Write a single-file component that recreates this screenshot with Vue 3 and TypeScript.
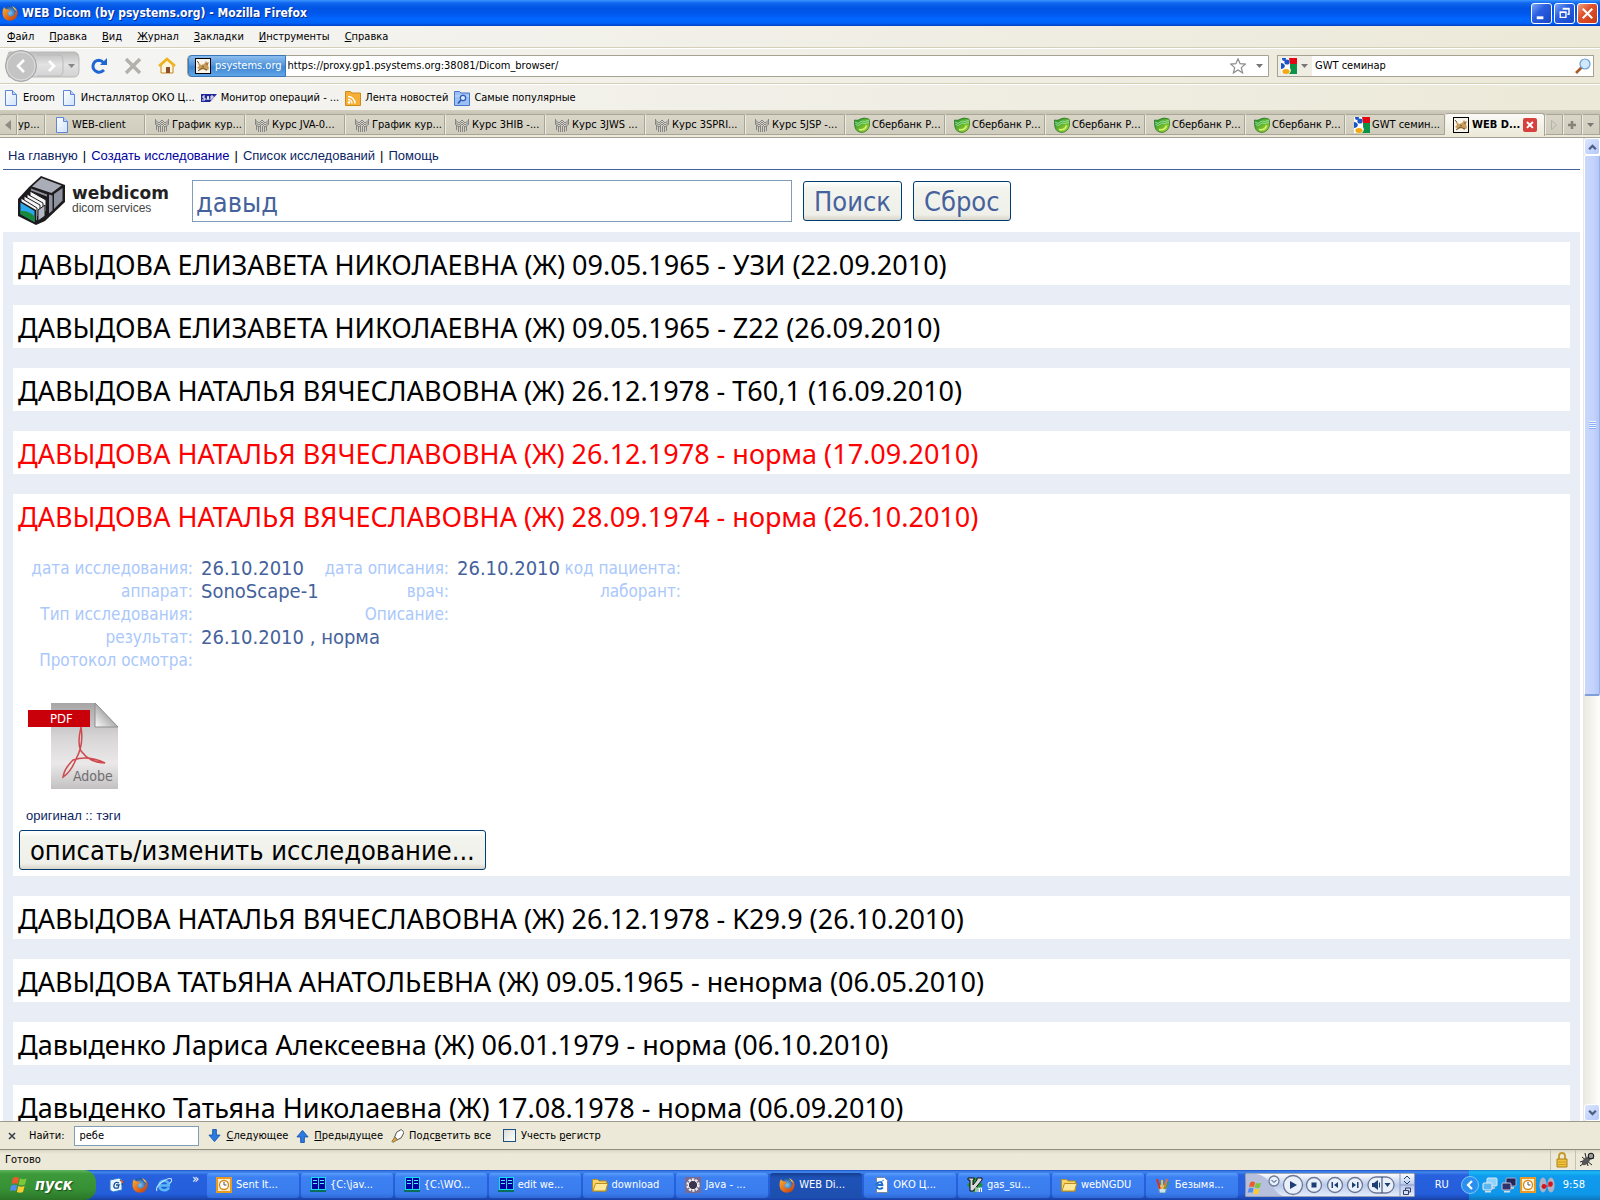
<script setup lang="ts">
import { ref } from 'vue'

interface Bookmark { icon: string; label: string }
interface Tab { icon: string; label: string }
interface Study { id: number; title: string; alert?: boolean; open?: boolean }
interface Field { label: string; value: string; span?: number }

const menu = [
  ['Ф', 'айл'], ['П', 'равка'], ['В', 'ид'], ['Ж', 'урнал'],
  ['З', 'акладки'], ['И', 'нструменты'], ['С', 'правка'],
]

const bookmarks: Bookmark[] = [
  { icon: 'page', label: 'Eroom' },
  { icon: 'page', label: 'Инсталлятор ОКО Ц...' },
  { icon: 'sap', label: 'Монитор операций - ...' },
  { icon: 'rss', label: 'Лента новостей' },
  { icon: 'smart', label: 'Самые популярные' },
]

const tabs: Tab[] = [
  { icon: 'page', label: 'WEB-client' },
  { icon: 'course', label: 'График кур...' },
  { icon: 'course', label: 'Курс JVA-0...' },
  { icon: 'course', label: 'График кур...' },
  { icon: 'course', label: 'Курс 3HIB -...' },
  { icon: 'course', label: 'Курс 3JWS ...' },
  { icon: 'course', label: 'Курс 3SPRI...' },
  { icon: 'course', label: 'Курс 5JSP -...' },
  { icon: 'sber', label: 'Сбербанк Р...' },
  { icon: 'sber', label: 'Сбербанк Р...' },
  { icon: 'sber', label: 'Сбербанк Р...' },
  { icon: 'sber', label: 'Сбербанк Р...' },
  { icon: 'sber', label: 'Сбербанк Р...' },
  { icon: 'google', label: 'GWT семин...' },
]

const studies: Study[] = [
  { id: 1, title: 'ДАВЫДОВА ЕЛИЗАВЕТА НИКОЛАЕВНА (Ж) 09.05.1965 - УЗИ (22.09.2010)' },
  { id: 2, title: 'ДАВЫДОВА ЕЛИЗАВЕТА НИКОЛАЕВНА (Ж) 09.05.1965 - Z22 (26.09.2010)' },
  { id: 3, title: 'ДАВЫДОВА НАТАЛЬЯ ВЯЧЕСЛАВОВНА (Ж) 26.12.1978 - T60,1 (16.09.2010)' },
  { id: 4, title: 'ДАВЫДОВА НАТАЛЬЯ ВЯЧЕСЛАВОВНА (Ж) 26.12.1978 - норма (17.09.2010)', alert: true },
  { id: 5, title: 'ДАВЫДОВА НАТАЛЬЯ ВЯЧЕСЛАВОВНА (Ж) 28.09.1974 - норма (26.10.2010)', alert: true, open: true },
  { id: 6, title: 'ДАВЫДОВА НАТАЛЬЯ ВЯЧЕСЛАВОВНА (Ж) 26.12.1978 - K29.9 (26.10.2010)' },
  { id: 7, title: 'ДАВЫДОВА ТАТЬЯНА АНАТОЛЬЕВНА (Ж) 09.05.1965 - ненорма (06.05.2010)' },
  { id: 8, title: 'Давыденко Лариса Алексеевна (Ж) 06.01.1979 - норма (06.10.2010)' },
  { id: 9, title: 'Давыденко Татьяна Николаевна (Ж) 17.08.1978 - норма (06.09.2010)' },
]

const details: Field[][] = [
  [
    { label: 'дата исследования:', value: '26.10.2010' },
    { label: 'дата описания:', value: '26.10.2010' },
    { label: 'код пациента:', value: '' },
  ],
  [
    { label: 'аппарат:', value: 'SonoScape-1' },
    { label: 'врач:', value: '' },
    { label: 'лаборант:', value: '' },
  ],
  [
    { label: 'Тип исследования:', value: '' },
    { label: 'Описание:', value: '', span: 3 },
  ],
  [{ label: 'результат:', value: '26.10.2010 , норма', span: 5 }],
  [{ label: 'Протокол осмотра:', value: '', span: 5 }],
]

const tasks: Tab[] = [
  { icon: 'outlook', label: 'Sent It...' },
  { icon: 'far', label: '{C:\\jav...' },
  { icon: 'far', label: '{C:\\WO...' },
  { icon: 'far', label: 'edit we...' },
  { icon: 'folder', label: 'download' },
  { icon: 'eclipse', label: 'Java - ...' },
  { icon: 'firefox', label: 'WEB Di...' },
  { icon: 'iepage', label: 'ОКО Ц...' },
  { icon: 'vim', label: 'gas_su...' },
  { icon: 'folder', label: 'webNGDU' },
  { icon: 'paint', label: 'Безымя...' },
]
const activeTask = 6

const address = ref('https://proxy.gp1.psystems.org:38081/Dicom_browser/')
const webSearch = ref('GWT семинар')
const query = ref('давыд')
const findText = ref('ребе')
const matchCase = ref(false)
</script>

<template>
  <div class="desktop">
    <svg class="sprites" aria-hidden="true">
      <defs>
        <linearGradient id="g-page" x1="0" y1="0" x2="1" y2="1"><stop offset="0" stop-color="#fff" /><stop offset="1" stop-color="#cfe2fb" /></linearGradient>
        <linearGradient id="g-sber" x1="0" y1="0" x2="1" y2="1"><stop offset="0" stop-color="#1b8a2c" /><stop offset="1" stop-color="#b4e02a" /></linearGradient>
        <linearGradient id="g-pdf" x1="0" y1="0" x2="0" y2="1"><stop offset="0" stop-color="#a8a5a7" /><stop offset="0.4" stop-color="#d8d5d6" /><stop offset="0.7" stop-color="#eae8e8" /><stop offset="1" stop-color="#c4c1c3" /></linearGradient>
        <linearGradient id="g-fold" x1="1" y1="0" x2="0" y2="1"><stop offset="0.4" stop-color="#a19fa1" /><stop offset="1" stop-color="#fff" /></linearGradient>
        <radialGradient id="g-globe"><stop offset="0" stop-color="#7fc4f2" /><stop offset="1" stop-color="#1b4f9c" /></radialGradient>
        <linearGradient id="g-fox" x1="0" y1="0" x2="1" y2="1"><stop offset="0" stop-color="#f9b233" /><stop offset="0.5" stop-color="#e8701a" /><stop offset="1" stop-color="#b53a12" /></linearGradient>
      </defs>
      <symbol id="page" viewBox="0 0 16 16"><path d="M2.500.500h7l4 4v11h-11z" fill="url(#g-page)" stroke="#5f86d6" /><path d="M9.500.500v4h4" fill="#bcd4f8" stroke="#5f86d6" /></symbol>
      <symbol id="sap" viewBox="0 0 16 16"><path d="M0 4h16l-7 8H0z" fill="#20279a" /><path d="M4 6H2v2h2v2H1M6 10l1-4 1 4M10 10V6h2v2h-2" fill="none" stroke="#fff" /></symbol>
      <symbol id="rss" viewBox="0 0 16 16"><path d="M.500 3V1.500h5L7 3h8.500v12.500H.500z" fill="#f6ae33" stroke="#cf8a1c" /><path d="M3 6.500a7 7 0 0 1 7 7M3 9.500a4 4 0 0 1 4 4" fill="none" stroke="#fff" stroke-width="1.500" /><circle cx="4" cy="12.500" r="1.300" fill="#fff" /></symbol>
      <symbol id="smart" viewBox="0 0 16 16"><path d="M.500 3V1.500h5L7 3h8.500v12.500H.500z" fill="#9dc0f4" stroke="#4a75cc" /><path d="M1 6h14" stroke="#c8defc" /><circle cx="9" cy="8" r="2.700" fill="#dcebff" stroke="#2c58b4" stroke-width="1.200" /><path d="M7 10l-3 3.500" stroke="#2c58b4" stroke-width="1.800" /></symbol>
      <symbol id="course" viewBox="0 0 16 16"><path d="M1 3l4 3 3-3 3 3 4-3M1 5l4 3 3-3 3 3 4-3M1 7l4 3 3-3 3 3 4-3M1.500 2v5M14.500 2v5M4.500 9v6M6.500 9v6M8.500 9v6M10.500 9v6M12.500 9v5M2.500 8v5" fill="none" stroke="#858585" stroke-width="1" /></symbol>
      <symbol id="sber" viewBox="0 0 16 16"><path d="M.500 3q3 1 6-1t8.500 0q1 3 .500 6-1 6.500-7.500 7.500Q2 15 1 10 0 6 .500 3z" fill="url(#g-sber)" stroke="#1c6e24" stroke-width=".700" /><path d="M1 5l3 1.500L8 4l3 .500L15 3M1.500 7.500l3 1L8 6l3 .500 4-1.500" fill="none" stroke="#8fe0a0" /><path d="M5 12.500q6 1 7.500-4" stroke="#d6f37d" fill="none" stroke-width="1.500" /></symbol>
      <symbol id="google" viewBox="0 0 16 16"><path d="M0 0h16v16H0z" fill="#fff" /><path d="M8 0h8v6H9z" fill="#e30613" /><path d="M9 6h7v10H8q3-3 1-6z" fill="#0c9347" /><circle cx="3" cy="1" r="2" fill="#1a55c8" /><circle cx="6" cy="4" r="2.600" fill="#1a55c8" /><path d="M0 5q3 0 4 3-1 3-4 3z" fill="#1a55c8" /><ellipse cx="5" cy="13.500" rx="3.600" ry="2.500" fill="#f4a70e" /></symbol>
      <symbol id="cat" viewBox="0 0 16 16"><rect x=".500" y=".500" width="15" height="15" fill="#f8f5ee" stroke="#000" /><path d="M2 3l2 2 2 2 3-1 2-3 1 1.500L14 4l-1 3 1 4-3 2-2-2-3 1-3 1 1-2-2-1 2-2z" fill="#c99c5c" /><path d="M2 3l2 2M7 8l2 1M3 13l4-3 5 2M11 6l2 0" stroke="#7b5b33" fill="none" /></symbol>
      <symbol id="firefox" viewBox="0 0 16 16"><circle cx="8" cy="8" r="7" fill="url(#g-globe)" /><path d="M2 2Q0 5 .500 9q1 6.500 7.500 6.700 6.500-.200 7.500-6.700.400-4-2.500-6.500Q14.500 6 13 9q-2 3-5 2.500-3-1-2.500-4L8 6 6.500 4.500Q5 4.500 4 4 2.500 3.500 2 2z" fill="url(#g-fox)" /><path d="M10 1q3 1 4.500 5-1-1-2-1.500" fill="#fbd24a" /></symbol>
      <symbol id="ie" viewBox="0 0 16 16"><path d="M13 10.500Q11 13.500 8 13.300 3.500 13 3.300 8.500 3.600 4 8 3.700q4.700.300 4.800 4.800H4" fill="none" stroke="#59b9f5" stroke-width="2.600" /><path d="M1 14Q-1 10 6 5t9.500-3q1 2-2 4.500" fill="none" stroke="#bfe6ff" stroke-width="1.100" /></symbol>
      <symbol id="iepage" viewBox="0 0 16 16"><path d="M3.500.500h8l3 3v12h-11z" fill="#fff" stroke="#7b8797" /><path d="M10 10.500Q7 13 4.500 11 2 8 5 5.500 9 4 9.500 8H4" fill="none" stroke="#1d6fcf" stroke-width="1.800" /><path d="M1 13Q1 8 11 3" stroke="#3a8be0" fill="none" /></symbol>
      <symbol id="mail" viewBox="0 0 16 16"><path d="M2 3l9-2 3 2v10l-9 2-3-2z" fill="#e7f3fd" stroke="#2a78c8" /><path d="M11 6Q7 4 6 8t4 3l1-3H8M12 3l3 2-1 3" fill="none" stroke="#174a96" stroke-width="1.300" /><path d="M13 3l2 3" stroke="#e0661b" stroke-width="1.500" /></symbol>
      <symbol id="outlook" viewBox="0 0 16 16"><rect x="1" y="1" width="14" height="14" fill="#fbeed0" stroke="#e89a22" stroke-width="2" /><circle cx="8" cy="8" r="4.500" fill="#fff" stroke="#d58717" stroke-width="1.300" /><path d="M8 5v3h2.500" stroke="#555" fill="none" /></symbol>
      <symbol id="far" viewBox="0 0 16 16"><path d="M1 0h15v13H1z" fill="#12e0f0" /><path d="M2 1h6v11H2zM9 1h6v11H9z" fill="#0000a0" /><path d="M3 3.500h4M3 6.500h4M10 3.500h4M10 6.500h4" stroke="#58e8ff" /><path d="M0 13h16v2H0z" fill="#0b6e5a" /></symbol>
      <symbol id="folder" viewBox="0 0 16 16"><path d="M.500 4V2.500h5L7 4h7.500v10H.500z" fill="#f7d56a" stroke="#b98d1f" /><path d="M1 14L3.500 6.500h12.300L13.500 14z" fill="#fde999" stroke="#b98d1f" /></symbol>
      <symbol id="eclipse" viewBox="0 0 16 16"><rect width="16" height="16" fill="#7b6a8f" /><circle cx="8" cy="8" r="5.500" fill="#4c4459" stroke="#eee" stroke-width="2.400" stroke-dasharray="2.300 1.150" /><circle cx="8" cy="8" r="4.600" fill="#3b3550" stroke="#f4f4f4" stroke-width="1" /></symbol>
      <symbol id="vim" viewBox="0 0 16 16"><path d="M8 0l8 8-8 8-8-8z" fill="#1f8f3a" /><path d="M1 1h6v2H6v5l4-5V1h5v2L6 14H3V3H1z" fill="#d9dadb" stroke="#111" /><path d="M9 10v5M11 15v-4h1.500v4M13 11h1.500v4" stroke="#fff" stroke-width="1" fill="none" /></symbol>
      <symbol id="paint" viewBox="0 0 16 16"><path d="M3 8h9l-1.500 8h-6z" fill="#c9e4f2" stroke="#6f93ad" /><path d="M5 12L2 2" stroke="#d4321f" stroke-width="2" /><path d="M7 12V3" stroke="#f0c02b" stroke-width="2" /><path d="M9 12l3-10" stroke="#e8762a" stroke-width="2" /><path d="M10 12l4-7" stroke="#3f9d46" stroke-width="1.500" /></symbol>
      <symbol id="winflag" viewBox="0 0 20 20"><path d="M4 3q3-2 6 0L8.500 9q-3-1.500-6 0z" fill="#ee5a2a" /><path d="M11 3.500q3 1.500 6.500 0L16 9.500q-3 1.500-6.500 0z" fill="#7cc73b" /><path d="M2.200 10.500q3-1.500 6 0L6.800 16q-3-1.500-6 0z" fill="#4f8eee" /><path d="M9.300 11q3 1.500 6.300 0L14 17q-3 1.500-6.200 0z" fill="#fbcb31" /></symbol>
      <symbol id="net" viewBox="0 0 16 16"><rect x="5" y="1" width="10" height="8" rx="1" fill="#8fd4fa" stroke="#dce8f2" /><path d="M8 10h5v2H8z" fill="#b9c4cf" /><rect x="1" y="6" width="9" height="7" rx="1" fill="#5cb7f0" stroke="#e8eef4" /><path d="M3 14h6v1.500H3z" fill="#d6dde4" /></symbol>
      <symbol id="netoff" viewBox="0 0 16 16"><rect x="5" y="1" width="10" height="8" rx="1" fill="#23265a" stroke="#a9b2c8" /><path d="M8 10h5v2H8z" fill="#b9c4cf" /><rect x="1" y="6" width="9" height="7" rx="1" fill="#30336b" stroke="#c3cada" /><path d="M3 14h6v1.500H3z" fill="#d6dde4" /></symbol>
      <symbol id="vnc" viewBox="0 0 16 16"><ellipse cx="4" cy="8" rx="3.600" ry="7.500" fill="#aeb0c4" /><ellipse cx="12" cy="8" rx="3.600" ry="7.500" fill="#aeb0c4" /><path d="M3 9h10" stroke="#d3262b" /><circle cx="5" cy="9.500" r="2.400" fill="#d3161d" /><circle cx="11.500" cy="7" r="2.400" fill="#d3161d" /></symbol>
    </svg>

    <header class="titlebar">
      <svg class="i16"><use href="#firefox" /></svg>
      <h1>WEB Dicom (by psystems.org) - Mozilla Firefox</h1>
      <button class="winbtn" aria-label="Свернуть"><svg viewBox="0 0 20 20"><path d="M5 13h7v3H5z" fill="#fff" /></svg></button>
      <button class="winbtn" aria-label="Восстановить"><svg viewBox="0 0 20 20"><path d="M8 4h7v2H8zM14 4h1.500v7.500H13V10h1z" fill="#fff" /><path d="M5.500 8.500h6v5.500h-6z" fill="none" stroke="#fff" stroke-width="1.400" /><path d="M5 8h7v1.500H5z" fill="#fff" /></svg></button>
      <button class="winbtn close" aria-label="Закрыть"><svg viewBox="0 0 20 20"><path d="M5 5l10 10M15 5L5 15" stroke="#fff" stroke-width="2.200" /></svg></button>
    </header>

    <nav class="menubar">
      <button v-for="m in menu" :key="m[1]"><u>{{ m[0] }}</u>{{ m[1] }}</button>
    </nav>

    <div class="toolbar">
      <svg class="backfwd" viewBox="0 0 78 34">
        <defs><linearGradient id="g-nav" x1="0" y1="0" x2="0" y2="1"><stop offset="0" stop-color="#bcbcbc" /><stop offset="0.5" stop-color="#e2e2e2" /><stop offset="1" stop-color="#d2d2d2" /></linearGradient></defs>
        <path d="M6 3h66q4 1 4 6v12q0 7-5 7H6q-6-12 0-25z" fill="url(#g-nav)" stroke="#b9b9b9" />
        <path d="M34 6h22q4 0 4 4v11q0 6-4 6H34" fill="none" stroke="#bbb" />
        <circle cx="18" cy="17" r="15.500" fill="#c4c4c4" stroke="#a4a4a4" /><circle cx="18" cy="17" r="14" fill="none" stroke="#dedede" />
        <path d="M21 11l-6 6 6 6M46 12l5 5-5 5" fill="none" stroke="#fff" stroke-width="2.600" />
        <path d="M65 15h7l-3.500 4z" fill="#888" />
      </svg>
      <button class="tool" aria-label="Обновить"><svg viewBox="0 0 18 18"><path d="M14 13Q11 16 7.500 15 2.500 13 3 8.500 4 3.500 9 3.300q3 .2 4.500 2.500" fill="none" stroke="#1f67d2" stroke-width="3" /><path d="M10 8h7V1z" fill="#1f67d2" /></svg></button>
      <button class="tool" aria-label="Остановить"><svg viewBox="0 0 18 18"><path d="M2 2l14 14M16 2L2 16" stroke="#b3b1aa" stroke-width="3.400" /></svg></button>
      <button class="tool" aria-label="Домой"><svg viewBox="0 0 18 18"><path d="M3 8v8h12V8L9 3z" fill="#fdf6dc" stroke="#c68a1d" /><path d="M1 9l8-7 8 7" fill="none" stroke="#f0b21f" stroke-width="2.600" /><path d="M8 10h4v6H8z" fill="#8c4f2b" /></svg></button>
      <div class="urlbar">
        <span class="identity"><svg class="i16"><use href="#cat" /></svg>psystems.org</span>
        <input v-model="address" aria-label="Адрес" />
        <svg class="i16" viewBox="0 0 16 16"><path d="M8 .800l2.100 4.900 5.200.400-4 3.500 1.300 5.300L8 12l-4.600 2.900 1.300-5.300-4-3.500 5.200-.400z" fill="#fff" stroke="#8a8a8a" stroke-width="1.200" /></svg>
        <svg class="drop" viewBox="0 0 7 4"><path d="M0 0h7L3.500 4z" fill="#777" /></svg>
      </div>
      <div class="websearch">
        <span class="engine"><svg class="i16"><use href="#google" /></svg><svg class="drop" viewBox="0 0 7 4"><path d="M0 0h7L3.500 4z" fill="#777" /></svg></span>
        <input v-model="webSearch" aria-label="Поиск в интернете" />
        <svg class="i16" viewBox="0 0 16 16"><path d="M7 9l-6 6" stroke="#a95b26" stroke-width="2.600" /><circle cx="10" cy="6" r="5" fill="#cfe8fb" stroke="#6d9fd4" stroke-width="1.200" /></svg>
      </div>
    </div>

    <nav class="bookmarks">
      <a v-for="b in bookmarks" :key="b.label" href="#"><svg class="i16"><use :href="'#' + b.icon" /></svg>{{ b.label }}</a>
    </nav>

    <div class="tabs">
      <button class="tab scroll" aria-label="Назад"><svg viewBox="0 0 6 10"><path d="M6 0v10L0 5z" fill="#8f8d82" /></svg></button>
      <button class="tab partial">ур...</button>
      <button v-for="(t, n) in tabs" :key="n" class="tab"><svg class="i16"><use :href="'#' + t.icon" /></svg>{{ t.label }}</button>
      <div class="tab active"><svg class="i16"><use href="#cat" /></svg><b>WEB D...</b><button aria-label="Закрыть вкладку"><svg viewBox="0 0 14 14"><path d="M4 4l6 6M10 4l-6 6" stroke="#fff" stroke-width="2" /></svg></button></div>
      <button class="tab small" aria-label="Вперёд"><svg viewBox="0 0 6 10"><path d="M.500 .500v9l5-4.500z" fill="none" stroke="#b5b3a6" /></svg></button>
      <button class="tab small" aria-label="Новая вкладка"><svg viewBox="0 0 10 10"><path d="M5 1v8M1 5h8" stroke="#85837a" stroke-width="2.600" /></svg></button>
      <button class="tab small" aria-label="Список вкладок"><svg class="drop" viewBox="0 0 7 4"><path d="M0 0h7L3.500 4z" fill="#777" /></svg></button>
    </div>

    <div class="viewport">
      <main class="page">
        <nav class="links">
          <a href="#">На главную</a><span>|</span><a href="#" class="new">Создать исследование</a><span>|</span><a href="#">Список исследований</a><span>|</span><a href="#">Помощь</a>
        </nav>
        <form class="search" @submit.prevent>
          <div class="logo">
            <svg viewBox="0 0 48 50">
              <path d="M11 11L23 0l24 9v17L27 45l-9 4L0 40V23z" fill="#1c1a1c" />
              <path d="M14 10.500l9.500-8.500 20 7.500-10 7.500z" fill="#a9adb8" />
              <path d="M36 18l8.500-6v12.500L36 33z" fill="#8f939f" />
              <path d="M31 18.500l3.500 1v15l-3.500 3z" fill="#8f939f" /><path d="M13 12.500l16 6v2l-16-6z" fill="#8f939f" />
              <g fill="#f4f4f6" stroke="#1c1a1c"><path d="M12 15l16 9v12l-16-8z" /><path d="M9 18l16 9v12L9 30z" /><path d="M6 20l16 9v13L6 33z" /><path d="M3 22l16 10v13L3 36z" /></g>
              <path d="M20 34l7-5v11l-7 5z" fill="#b4b8c2" stroke="#1c1a1c" />
              <path d="M1 24l17 10v14L1 39z" fill="#1c1a1c" /><path d="M2.500 26.500l14 8.500v11l-14-8z" fill="#2aa6ea" /><path d="M2.500 35q9-.5 14 5.500v5.500l-14-8z" fill="#178a3a" />
            </svg>
            <span><b>webdicom</b><small>dicom services</small></span>
          </div>
          <input v-model="query" aria-label="Поиск пациента" />
          <button class="xp" type="submit">Поиск</button>
          <button class="xp" type="reset">Сброс</button>
        </form>

        <section class="results">
          <article v-for="s in studies" :key="s.id" :class="{ open: s.open }">
            <h2 :class="{ alert: s.alert }">{{ s.title }}</h2>
            <template v-if="s.open">
              <table>
                <colgroup><col class="c1" /><col class="c2" /><col class="c3" /><col class="c4" /><col class="c5" /><col class="c6" /></colgroup>
                <tbody>
                  <tr v-for="(r, n) in details" :key="n">
                    <template v-for="f in r" :key="f.label">
                      <th scope="row">{{ f.label }}</th><td :colspan="f.span ?? 1">{{ f.value }}</td>
                    </template>
                  </tr>
                </tbody>
              </table>
              <svg class="pdf" viewBox="0 0 90 86" role="img" aria-label="PDF">
                <path d="M23 0h44l23 24v62H23z" fill="url(#g-pdf)" />
                <path d="M67 0l23 24H67z" fill="url(#g-fold)" stroke="#8f8d8f" />
                <path d="M53 24q-4 17 0 24 9 12 24 12-17-8-32-3-9 9-10 17 8-5 13-18 8-14 5-32z" fill="none" stroke="#cf4a4f" stroke-width="1.500" />
                <path d="M0 7h62v17H0z" fill="#c9000a" />
                <text x="22" y="20" font-size="13" fill="#fff" class="narrow">PDF</text>
                <text x="45" y="78" font-size="14" fill="#6f6d6f" class="narrow">Adobe</text>
              </svg>
              <p><a href="#">оригинал</a> :: <a href="#">тэги</a></p>
              <button class="xp edit">описать/изменить исследование...</button>
            </template>
          </article>
        </section>
      </main>
      <div class="scrollbar">
        <button class="sb" aria-label="Вверх"><svg viewBox="0 0 8 5"><path d="M1 4.500l3-3 3 3" fill="none" stroke="#4d6185" stroke-width="2" /></svg></button>
        <div class="track"><div class="thumb"><i></i></div></div>
        <button class="sb" aria-label="Вниз"><svg viewBox="0 0 8 5"><path d="M1 .500l3 3 3-3" fill="none" stroke="#4d6185" stroke-width="2" /></svg></button>
      </div>
    </div>

    <div class="findbar">
      <button aria-label="Закрыть панель"><svg class="fx" viewBox="0 0 8 8"><path d="M1 1l6 6M7 1L1 7" stroke="#3a3f4f" stroke-width="1.600" /></svg></button>
      <label for="find">Найти:</label>
      <input id="find" v-model="findText" />
      <button><svg class="ar" viewBox="0 0 14 14"><path d="M5 0h4v6h4l-6 7-6-7h4z" fill="#2b7be0" stroke="#1b57ad" /></svg><span><u>С</u>ледующее</span></button>
      <button><svg class="ar" viewBox="0 0 14 14"><path d="M5 14h4V8h4L7 1 1 8h4z" fill="#2b7be0" stroke="#1b57ad" /></svg><span><u>П</u>редыдущее</span></button>
      <button><svg class="ar" viewBox="0 0 14 14"><path d="M6 3l5-3 3 3-3 6-4 2-3-3z" fill="#fff" stroke="#444" /><path d="M4 8l3 3-5 3-1-1z" fill="#e2a52b" stroke="#555" stroke-width=".700" /></svg><span>Подс<u>в</u>етить все</span></button>
      <label class="check"><input v-model="matchCase" type="checkbox" /><span>Учесть <u>р</u>егистр</span></label>
    </div>

    <footer class="status">
      <span>Готово</span>
      <i><svg class="i16" viewBox="0 0 16 16"><path d="M5 7V4q0-3 3-3t3 3v3" fill="none" stroke="#c49a2a" stroke-width="1.800" /><path d="M3 7h10v8H3z" fill="#f0c33c" stroke="#b07f12" /><path d="M4 10h8M4 12.500h8" stroke="#cf9c24" /></svg></i>
      <i><svg class="i16" viewBox="0 0 16 16"><path d="M3 5l10 8M6 1l3 13M1 10l14-4M1 14l4-3M9 2l5 3" stroke="#222" /><ellipse cx="7" cy="9" rx="5" ry="3" transform="rotate(-45 7 9)" fill="#555" /><circle cx="12" cy="4" r="2.800" fill="#999" stroke="#111" /></svg></i>
    </footer>

    <div class="taskbar">
      <button class="start"><svg viewBox="0 0 20 20"><use href="#winflag" /></svg>пуск</button>
      <div class="quick">
        <svg class="i16"><use href="#mail" /></svg><svg class="i16"><use href="#firefox" /></svg><svg class="i16"><use href="#ie" /></svg><span>»</span>
      </div>
      <div class="tasks">
        <button v-for="(t, n) in tasks" :key="n" :class="{ on: n === activeTask }"><svg class="i16"><use :href="'#' + t.icon" /></svg>{{ t.label }}</button>
      </div>
      <svg class="media" viewBox="0 0 170 24">
        <defs><linearGradient id="g-med" x1="0" y1="0" x2="0" y2="1"><stop offset="0" stop-color="#fff" /><stop offset="0.500" stop-color="#b9c9ea" /><stop offset="1" stop-color="#e8effb" /></linearGradient></defs>
        <path d="M0 0h170v24H0z" fill="url(#g-med)" stroke="#454f70" />
        <path d="M1 1h10q10 1 17 13 4 7 10 9H1z" fill="#b6bfdc" />
        <svg x="2" y="7" width="16" height="16"><use href="#winflag" /></svg>
        <g fill="#e9f0fa" stroke="#6b7796" stroke-width="1.300"><circle cx="29" cy="8" r="5" /><circle cx="48" cy="12" r="9.500" /><circle cx="69" cy="12" r="7.500" /><circle cx="90" cy="12" r="7.500" /><circle cx="110" cy="12" r="7.500" /><rect x="123" y="4" width="26" height="16" rx="8" /></g>
        <path d="M45 8l7 4-7 4zM66.500 9.500h5v5h-5zM93 9v6l-4-3zM86.500 9h1.500v6h-1.500zM107 9v6l4-3zM112 9h1.500v6H112zM127 10h2l4-3v10l-4-3h-2zM139.500 10h6l-3 4z" fill="#1d3f74" />
        <path d="M26.500 7l2.500 2.500L31.500 7M134.500 9.500v5M159 6l3-3 3 3M159 8l3 3 3-3M137 4v16" fill="none" stroke="#1d3f74" />
        <path d="M155 0v24M155 12h15" stroke="#8795bd" /><path d="M158.500 17.500h5v4h-5zM160.500 17v-2h5v4h-2" fill="none" stroke="#333d66" />
      </svg>
      <span class="lang">RU</span>
      <div class="tray">
        <button class="expand" aria-label="Показать значки"><svg viewBox="0 0 18 18"><circle cx="9" cy="9" r="8.500" fill="#2b8ff0" stroke="#7cc6fa" /><path d="M11 5L7 9l4 4" fill="none" stroke="#fff" stroke-width="2.200" /></svg></button>
        <svg class="i16"><use href="#net" /></svg><svg class="i16"><use href="#netoff" /></svg><svg class="i16"><use href="#outlook" /></svg><svg class="i16"><use href="#vnc" /></svg>
        <time>9:58</time>
      </div>
    </div>
  </div>
</template>

<style>
body { overflow: hidden; }
</style>

<style scoped>
.desktop {
  --ui: "DejaVu Sans Condensed", "DejaVu Sans", sans-serif;
  display: flex; flex-direction: column; height: 100vh; overflow: hidden;
  font: 11px/14px var(--ui); color: #000; background: #ece9d8;
}
* { box-sizing: border-box; }
.sprites { position: absolute; width: 0; height: 0; }
svg { display: block; flex: none; }
button { font: inherit; color: inherit; background: none; border: 0; padding: 0; white-space: nowrap; }
input { font: inherit; color: inherit; border: 0; padding: 0; margin: 0; min-width: 0; outline: 0; background: transparent; }
a { color: inherit; text-decoration: none; }
.i16 { width: 16px; height: 16px; }
.drop { width: 7px; height: 4px; }

.titlebar {
  display: flex; align-items: center; gap: 2px; height: 26px; flex: none; padding: 0 2px;
  background: linear-gradient(#3c95ff 0, #1067ee 3px, #0054e3 8px, #0058ee 14px, #0067ff 19px, #0063f8 23px, #0040c4 26px);
}
.titlebar h1 { flex: 1; margin: 0 0 0 2px; font: bold 12px/16px var(--ui); color: #fff; text-shadow: 1px 1px #0a2a86; }
.winbtn { width: 21px; height: 21px; border: 1px solid #fff; border-radius: 3px; background: linear-gradient(135deg, #7da7f7, #2a5fe0 40%, #1646c8); }
.winbtn.close { background: linear-gradient(135deg, #f0a080, #e0522c 40%, #c53a16); }

.menubar, .toolbar, .bookmarks { display: flex; align-items: center; flex: none; background: linear-gradient(to right, #f5f5f4, #ece9d8); }
.menubar { height: 22px; gap: 15px; padding: 0 7px; border-bottom: 1px solid #d4cfb8; }
.toolbar { height: 36px; padding: 0 6px 0 3px; border-top: 1px solid #fff; border-bottom: 1px solid #d4cfb8; }
.backfwd { width: 78px; height: 34px; }
.tool { margin-left: 9px; padding: 0; width: 18px; height: 18px; }
.tool + .tool { margin-left: 16px; }
.urlbar, .websearch { display: flex; align-items: center; height: 22px; border: 1px solid #a5a294; background: #fff; }
.urlbar { flex: 1; margin-left: 11px; padding-right: 5px; border-radius: 4px 0 0 4px; gap: 10px; }
.urlbar input { flex: 1; margin-left: -8px; }
.identity { display: flex; align-items: center; gap: 4px; align-self: stretch; margin: -1px 0; padding: 0 3px 0 6px; color: #fff; border: 1px solid #3a76b8; border-radius: 4px 0 0 4px; background: linear-gradient(#8dbdee, #5598dc 45%, #3f86d2 55%, #5fa6e8); }
.websearch { width: 317px; margin-left: 8px; padding-right: 2px; }
.websearch input { flex: 1; margin-left: 3px; }
.engine { display: flex; align-items: center; gap: 4px; align-self: stretch; padding: 0 4px 0 3px; background: #f0eee4; }

.bookmarks { height: 26px; padding: 0 3px; gap: 6px; border-top: 1px solid #fff; }
.bookmarks a { display: flex; align-items: center; gap: 4px; white-space: nowrap; }

.tabs { display: flex; flex: none; height: 28px; padding-top: 4px; background: linear-gradient(#d3cfbf 0, #c6c3b4 4px, #cbc8b9 24px, #a3a193 24px, #a3a193 25px, #ece9d8 25px, #ece9d8 27px, #a3a193 27px); }
.tab { display: flex; align-items: center; gap: 2px; flex: 0 1 100px; height: 21px; padding: 0 0 0 8px; overflow: hidden; white-space: nowrap; border: 1px solid #a9a697; border-left-color: #efede3; border-radius: 2px 2px 0 0; background: linear-gradient(#d9d6c8, #cfccbd); }
.tab.scroll { flex: 0 0 17px; padding: 0 0 0 5px; border-width: 1px 1px 1px 0; }
.tab.scroll svg, .tab.small svg:not(.drop) { width: 6px; height: 10px; }
.tab.partial { flex: 0 0 28px; padding: 0; }
.tab.small { flex: 1 0 18px; padding: 0; justify-content: center; }
.tab.small:nth-last-child(2) svg { width: 10px; }
.tab.active { height: 23px; margin-top: -1px; padding-left: 7px; gap: 3px; border-bottom: 0; border-radius: 3px 3px 0 0; background: linear-gradient(#fbfaf7, #ece9d8); }
.tab.active b { flex: 1; }
.tab.active button { width: 14px; height: 14px; margin-right: 7px; border-radius: 2px; background: #d6413d; }

.viewport { display: flex; flex: 1; min-height: 0; background: #fff; }
.page { flex: 1; min-width: 0; padding: 0 3px; overflow: hidden; }
.links { display: flex; gap: 5px; padding: 10px 5px 5px; font: 13px/16px "Liberation Sans", sans-serif; border-bottom: 1px solid #45629c; }
.links a, article p a { color: #0b2564; }
.links .new { color: #0000a0; }
.search { display: flex; align-items: center; height: 62px; padding: 0 0 1px 15px; font-size: 27px; line-height: 32px; color: #45629c; }
.logo { display: flex; align-items: center; gap: 6px; width: 174px; color: #222; font-family: "DejaVu Sans", sans-serif; }
.logo svg { width: 48px; height: 50px; }
.logo span { padding-bottom: 4px; }
.logo b, .logo small { display: block; }
.logo b { font-size: 17px; line-height: 18px; }
.logo small { font: 12px/12px "Liberation Sans", sans-serif; color: #444; }
.search input { flex: 0 1 600px; height: 42px; padding: 3px 3px 0; border: 1px solid #7f9db9; }
.xp { height: 40px; padding: 2px 10px 0; border: 1px solid #003c74; border-radius: 3px; background: linear-gradient(#fff, #f4f4ef 15%, #f0f0ea 85%, #d8d4c8); }
.search .xp { margin-left: 11px; }

.results { display: flex; flex-direction: column; gap: 20px; padding: 10px; background: #e8edf6; }
article { padding: 6px 5px 4px; background: #fff; }
article.open { padding-bottom: 6px; }
h2 { margin: 0; font: normal 27px/33px "Noto Sans", sans-serif; white-space: nowrap; }
h2.alert { color: #f00; }
table { width: 760px; margin-top: 24px; table-layout: fixed; border-collapse: collapse; }
.c1 { width: 175px; } .c2 { width: 126px; } .c3 { width: 130px; } .c4 { width: 103px; } .c5 { width: 129px; }
th, td { height: 23px; padding: 0; font-weight: normal; line-height: 23px; white-space: nowrap; }
th { text-align: right; font-size: 17px; color: #aac8fb; }
td { padding-left: 8px; font-size: 20px; color: #45629c; }
.pdf { width: 90px; height: 86px; margin: 31px 0 0 10px; }
.narrow { font-family: "Liberation Sans Narrow", "DejaVu Sans Condensed", sans-serif; }
article p { margin: 19px 0 7px 8px; font: 13px/15px "Liberation Sans", sans-serif; color: #0b2564; }
.edit { display: block; margin-left: 1px; font-size: 27px; }

.scrollbar { display: flex; flex-direction: column; width: 17px; flex: none; background: linear-gradient(to right, #e9e8e0, #fefefb); }
.sb { display: flex; align-items: center; justify-content: center; height: 17px; margin-left: 1px; border: 1px solid #fff; border-radius: 3px; background: linear-gradient(135deg, #dbe5fe, #b4c9fb); }
.sb svg { width: 9px; height: 6px; }
.track { flex: 1; min-height: 0; }
.thumb { display: flex; align-items: center; justify-content: center; height: 57%; margin-left: 1px; border: 1px solid #fff; border-right-color: #9ab0dd; border-bottom: 2px solid #7f9edb; border-radius: 2px; background: linear-gradient(to right, #c9d7fc, #c3d3fd 60%, #b0c8fb); }
.thumb i { width: 7px; height: 8px; background: repeating-linear-gradient(#eef4fe 0, #eef4fe 1px, #8cb0f8 1px, #8cb0f8 2px); }

.findbar { display: flex; align-items: center; flex: none; height: 28px; padding-left: 8px; border-top: 1px solid #9d9a8c; background: #ece9d8; }
.findbar .fx { width: 8px; height: 8px; }
.findbar label { margin-left: 13px; }
.findbar > input { width: 125px; height: 20px; margin: 0 9px 0 10px; padding: 0 4px; border: 1px solid #7f9db9; background: #fff; }
.findbar button { display: flex; align-items: center; gap: 5px; margin-right: 8px; }
.findbar button:first-child { margin-right: 0; }
.ar { width: 13px; height: 14px; }
.findbar .check { display: flex; align-items: center; gap: 5px; margin-left: 4px; }
.check input { appearance: none; width: 13px; height: 13px; border: 1px solid #1c5180; background: linear-gradient(135deg, #dcdcd7, #fff); }

.status { display: flex; align-items: center; flex: none; height: 21px; padding-left: 5px; border-top: 1px solid #8f8d7f; background: linear-gradient(#d9d6c6, #ece9d8 4px, #ece9d8); }
.status span { flex: 1; }
.status i { display: flex; align-items: center; height: 100%; padding: 0 5px 0 3px; border-left: 1px solid #c5c2b0; }

.taskbar { display: flex; align-items: center; flex: none; height: 30px; color: #fff; background: linear-gradient(#1f4fc4 0, #4189ee 2px, #2861dd 5px, #245edb 24px, #1941a5 30px); }
.start { display: flex; align-items: center; gap: 6px; width: 96px; height: 30px; padding-left: 9px; border-radius: 0 12px 12px 0; font: italic bold 16px/20px var(--ui); text-shadow: 1px 1px 1px #1b4d18; background: linear-gradient(#5eb45c 0, #3c9a3a 4px, #368f34 20px, #2a7428 30px); }
.start svg { width: 20px; height: 20px; }
.quick { display: flex; gap: 8px; padding-left: 12px; width: 111px; }
.quick span { margin: -5px 0 0 12px; font-size: 13px; }
.tasks { display: flex; flex: 1; min-width: 0; gap: 2px; }
.tasks button { display: flex; align-items: center; gap: 4px; flex: 1 1 0; min-width: 0; height: 25px; padding-left: 9px; overflow: hidden; border-radius: 3px; background: linear-gradient(#5c9cfb, #3c81f3 4px, #3a7ced 20px, #2f69d6); }
.tasks button.on { background: linear-gradient(#153f90, #1e52b7 5px, #1d4fae); }
.media { width: 170px; height: 24px; margin-left: 7px; }
.lang { margin: 0 20px; font-size: 11px; }
.tray { display: flex; align-items: center; gap: 3px; height: 30px; padding-right: 15px; background: linear-gradient(#1581d8 0, #19b9f3 2px, #0f9bee 6px, #0f97ea 24px, #0d76bd 30px); }
.tray .expand { margin-left: -8px; width: 18px; height: 18px; }
.tray time { margin-left: 5px; }
</style>
